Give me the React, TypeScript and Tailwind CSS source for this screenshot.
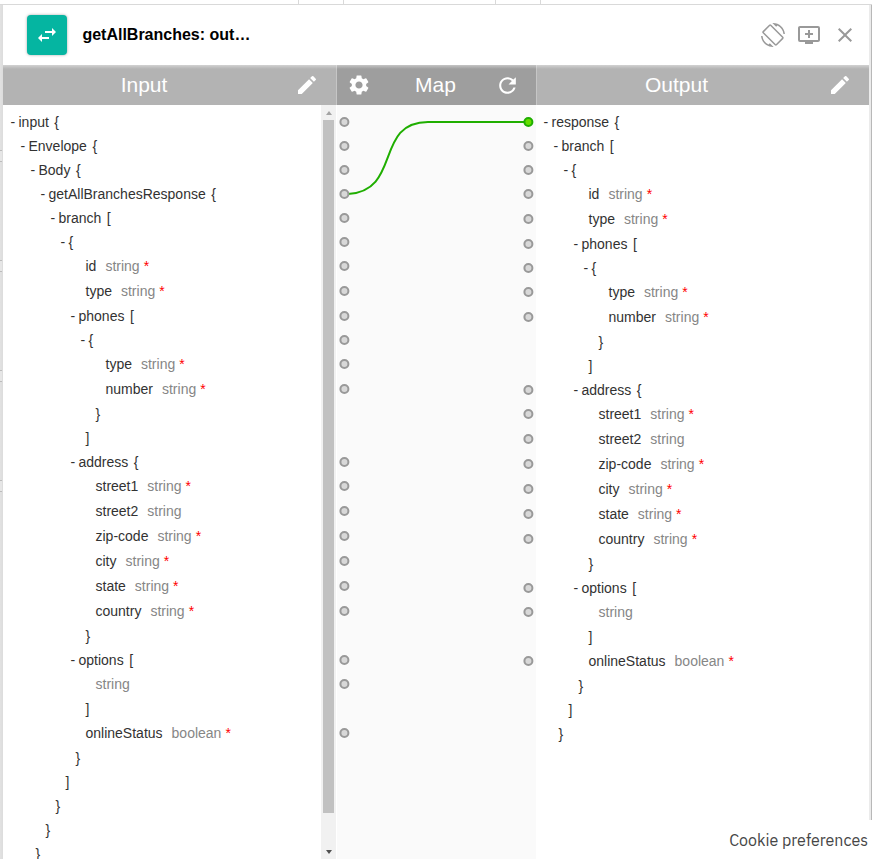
import React from "react";
import {
  MdAddToQueue,
  MdClose,
  MdEdit,
  MdRefresh,
  MdScreenRotation,
  MdSettings,
  MdSwapHoriz,
} from "react-icons/md";

type Row = {
  depth: number;
  name?: string;
  open?: "{" | "[";
  close?: "}" | "]";
  type?: string;
  required?: boolean;
};

const group = (depth: number, open: "{" | "[", name?: string): Row => ({ depth, open, name });
const end = (depth: number, close: "}" | "]"): Row => ({ depth, close });
const leaf = (depth: number, name: string | undefined, type = "string", required = true): Row => ({
  depth,
  name,
  type,
  required,
});

// Rows of a branch array; both schemas share this shape.
const branchRows = (d: number): Row[] => [
  group(d, "[", "branch"),
  group(d + 1, "{"),
  leaf(d + 2, "id"),
  leaf(d + 2, "type"),
  group(d + 2, "[", "phones"),
  group(d + 3, "{"),
  leaf(d + 4, "type"),
  leaf(d + 4, "number"),
  end(d + 3, "}"),
  end(d + 2, "]"),
  group(d + 2, "{", "address"),
  leaf(d + 3, "street1"),
  leaf(d + 3, "street2", "string", false),
  leaf(d + 3, "zip-code"),
  leaf(d + 3, "city"),
  leaf(d + 3, "state"),
  leaf(d + 3, "country"),
  end(d + 2, "}"),
  group(d + 2, "[", "options"),
  leaf(d + 3, undefined, "string", false),
  end(d + 2, "]"),
  leaf(d + 2, "onlineStatus", "boolean"),
  end(d + 1, "}"),
  end(d, "]"),
];

const inputRows: Row[] = [
  group(0, "{", "input"),
  group(1, "{", "Envelope"),
  group(2, "{", "Body"),
  group(3, "{", "getAllBranchesResponse"),
  ...branchRows(4),
  end(3, "}"),
  end(2, "}"),
  end(1, "}"),
];

const outputRows: Row[] = [group(0, "{", "response"), ...branchRows(1), end(0, "}")];

const rowHeight = (r: Row) => (r.type ? 25 : 24);

function portOffsets(rows: Row[]) {
  let y = 5;
  const out: number[] = [];
  for (const r of rows) {
    if (!r.close) out.push(y + 12);
    y += rowHeight(r);
  }
  return out;
}

function Tree({ rows }: { rows: Row[] }) {
  return (
    <div className="min-w-0 flex-1 overflow-hidden pt-[5px] pl-[7.5px] text-sm text-[#323232]">
      {rows.map((r, i) => (
        <div
          key={i}
          className={`flex whitespace-pre leading-6 ${r.type ? "h-[25px]" : "h-6"}`}
          style={{ paddingLeft: r.depth * 10 }}
        >
          {r.open ? (
            <>
              <span className="w-2">-</span>
              {r.name && <span className="mr-[5.5px]">{r.name}</span>}
              <span>{r.open}</span>
            </>
          ) : (
            <div className="flex pl-[15px]">
              {r.close && <span>{r.close}</span>}
              {r.name && <span className="mr-[9px]">{r.name}</span>}
              {r.type && <span className="text-[#868686]">{r.type}</span>}
              {r.required && <span className="ml-1 text-[#ff0000]">*</span>}
            </div>
          )}
        </div>
      ))}
    </div>
  );
}

function Port({ x, y, active }: { x: number; y: number; active?: boolean }) {
  return (
    <circle
      cx={x}
      cy={y}
      r={4}
      strokeWidth={2}
      fill={active ? "#66dd00" : "#d8d8d8"}
      stroke={active ? "#1fae00" : "#999999"}
    />
  );
}

function MapCanvas() {
  return (
    <svg width="199" height="754" className="block">
      <path d="M11 89 C65 86 37 17 91 17 L191 17" fill="none" stroke="#1fae00" strokeWidth="2" />
      {portOffsets(inputRows).map((y) => (
        <Port key={y} x={7.4} y={y} />
      ))}
      {portOffsets(outputRows).map((y, i) => (
        <Port key={y} x={191.4} y={y} active={i === 0} />
      ))}
    </svg>
  );
}

function Scrollbar() {
  return (
    <div className="flex w-[15px] shrink-0 flex-col items-center bg-[#f1f1f1]">
      <svg width="15" height="15">
        <path d="M5 10 L8 6 L11 10 Z" fill="#a3a3a3" />
      </svg>
      <div className="h-[693px] w-[11px] bg-[#c1c1c1]" />
      <div className="flex-1" />
      <svg width="15" height="15">
        <path d="M5 6 L11 6 L8 10 Z" fill="#505050" />
      </svg>
    </div>
  );
}

// Edges of the node boxes that peek out from under the panel.
function Backdrop() {
  return (
    <div className="flex w-[3px] shrink-0 flex-col gap-[98px] bg-linear-to-r from-[#e2e2e2] to-[#dcdcdc] pt-[145px]">
      {[0, 1, 2, 3].map((n) => (
        <div key={n} className="h-3 w-[2px] border-y border-[#bcbcbc] bg-[#e6e6e6]" />
      ))}
    </div>
  );
}

export default function App() {
  return (
    <div className="relative h-[859px] w-[872px] overflow-hidden bg-white font-['Liberation_Sans',Arial,sans-serif]">
      <div className="flex h-[5px] border-b border-[#d9d9d9]">
        <div className="w-[299px] border-r border-[#d9d9d9]" />
        <div className="w-[45px] border-r border-[#d9d9d9]" />
        <div className="w-[152px] border-r border-[#d9d9d9]" />
        <div className="w-[45px] border-r border-[#d9d9d9]" />
      </div>
      <div className="flex h-[854px]">
        <Backdrop />
        <div className="flex w-[866px] shrink-0 flex-col">
          <header className="flex h-[60px] items-center pl-[24.4px]">
            <div className="flex h-10 w-10 items-center justify-center rounded-[4px] bg-[#05b5a1] shadow-[0_0_3px_rgba(0,0,0,0.35)]">
              <MdSwapHoriz size={24} color="#fff" />
            </div>
            <h1 className="ml-[15px] flex-1 text-base font-bold text-black">getAllBranches: out…</h1>
            <div className="flex items-center gap-3 pr-3 text-[#999999]">
              <MdScreenRotation size={24} />
              <MdAddToQueue size={24} />
              <MdClose size={24} />
            </div>
          </header>
          <div className="relative flex h-10 text-[21px] text-white">
            <div className="flex w-[333px] items-center bg-[#b3b3b3] pr-[17px]">
              <span className="flex-1 pr-[10px] text-center">Input</span>
              <MdEdit size={24} />
            </div>
            <div className="flex w-[201px] items-center border-x border-[#c6c6c6] bg-[#9e9e9e] pr-4 pl-[10px]">
              <MdSettings size={24} />
              <span className="flex-1 pl-[5px] text-center">Map</span>
              <MdRefresh size={25} />
            </div>
            <div className="flex w-[332px] items-center bg-[#b3b3b3] pr-[17px]">
              <span className="flex-1 pr-[12px] text-center">Output</span>
              <MdEdit size={24} />
            </div>
            <div className="absolute inset-x-0 top-0 h-1 bg-linear-to-b from-white/40 to-transparent" />
          </div>
          <main className="flex h-[754px]">
            <Tree rows={inputRows} />
            <Scrollbar />
            <div className="ml-px w-[199px] shrink-0 bg-[#fafafa]">
              <MapCanvas />
            </div>
            <div className="flex w-[333px] shrink-0">
              <Tree rows={outputRows} />
            </div>
          </main>
        </div>
        <div className="h-[815px] w-[3px] shrink-0 border-r border-[#b8b8b8] bg-[#ebebeb]" />
      </div>
      <div className="absolute right-1 bottom-0 flex h-[39px] items-center bg-white font-['IBM_Plex_Sans',Roboto,sans-serif] text-base whitespace-nowrap text-[#464646]">
        Cookie preferences
      </div>
    </div>
  );
}
